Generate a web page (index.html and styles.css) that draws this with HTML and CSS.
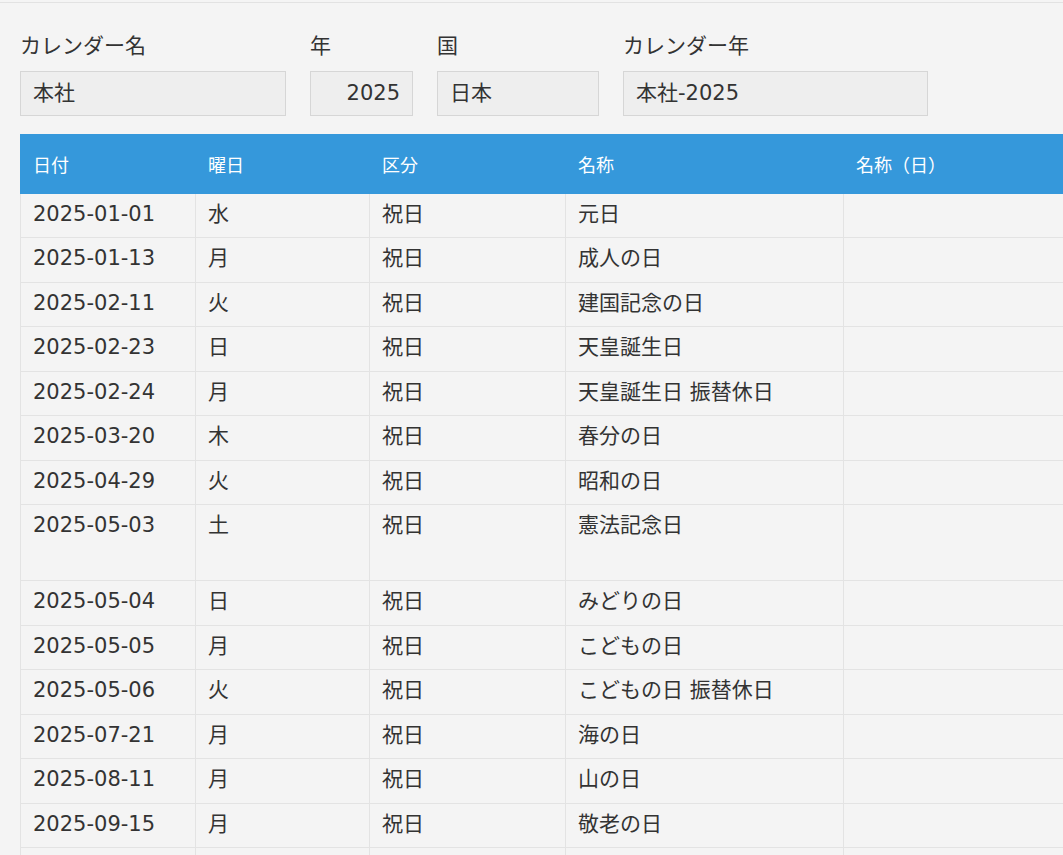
FILE: index.html
```html
<!DOCTYPE html>
<html lang="ja">
<head>
<meta charset="utf-8">
<title>カレンダー</title>
<link rel="stylesheet" href="styles.css">
</head>
<body>
<div class="page">
  <div class="form-row">
    <div class="field field-name">
      <div class="label">カレンダー名</div>
      <div class="input">本社</div>
    </div>
    <div class="field field-year">
      <div class="label">年</div>
      <div class="input input-right">2025</div>
    </div>
    <div class="field field-country">
      <div class="label">国</div>
      <div class="input">日本</div>
    </div>
    <div class="field field-calyear">
      <div class="label">カレンダー年</div>
      <div class="input">本社-2025</div>
    </div>
  </div>

  <table class="grid">
    <colgroup>
      <col class="c1"><col class="c2"><col class="c3"><col class="c4"><col class="c5">
    </colgroup>
    <thead>
      <tr><th>日付</th><th>曜日</th><th>区分</th><th>名称</th><th>名称（日）</th></tr>
    </thead>
    <tbody>
      <tr><td>2025-01-01</td><td>水</td><td>祝日</td><td>元日</td><td></td></tr>
      <tr><td>2025-01-13</td><td>月</td><td>祝日</td><td>成人の日</td><td></td></tr>
      <tr><td>2025-02-11</td><td>火</td><td>祝日</td><td>建国記念の日</td><td></td></tr>
      <tr><td>2025-02-23</td><td>日</td><td>祝日</td><td>天皇誕生日</td><td></td></tr>
      <tr><td>2025-02-24</td><td>月</td><td>祝日</td><td>天皇誕生日 振替休日</td><td></td></tr>
      <tr><td>2025-03-20</td><td>木</td><td>祝日</td><td>春分の日</td><td></td></tr>
      <tr><td>2025-04-29</td><td>火</td><td>祝日</td><td>昭和の日</td><td></td></tr>
      <tr class="tall"><td>2025-05-03</td><td>土</td><td>祝日</td><td>憲法記念日</td><td></td></tr>
      <tr><td>2025-05-04</td><td>日</td><td>祝日</td><td>みどりの日</td><td></td></tr>
      <tr><td>2025-05-05</td><td>月</td><td>祝日</td><td>こどもの日</td><td></td></tr>
      <tr><td>2025-05-06</td><td>火</td><td>祝日</td><td>こどもの日 振替休日</td><td></td></tr>
      <tr><td>2025-07-21</td><td>月</td><td>祝日</td><td>海の日</td><td></td></tr>
      <tr><td>2025-08-11</td><td>月</td><td>祝日</td><td>山の日</td><td></td></tr>
      <tr><td>2025-09-15</td><td>月</td><td>祝日</td><td>敬老の日</td><td></td></tr>
      <tr class="offscreen"><td></td><td></td><td></td><td></td><td></td></tr>
    </tbody>
  </table>
</div>
</body>
</html>
```

FILE: styles.css
```css
html, body {
  margin: 0;
  padding: 0;
  overflow: hidden;
  background: #f4f4f4;
}

body {
  padding-top: 2px;
  font-family: "DejaVu Sans", "Noto Sans CJK JP", sans-serif;
  color: #333333;
}

.page {
  border-top: 1px solid #e2e2e2;
  padding: 29px 0 0 20px;
}

.form-row {
  display: flex;
  gap: 24px;
}

.field {
  display: flex;
  flex-direction: column;
}

.field-name { width: 266px; }
.field-year { width: 103px; }
.field-country { width: 162px; }
.field-calyear { width: 305px; }

.label {
  font-size: 21px;
  line-height: 28px;
  margin-bottom: 11px;
  white-space: nowrap;
}

.input {
  box-sizing: border-box;
  height: 45px;
  border: 1px solid #d6d6d6;
  background: #eeeeee;
  font-size: 21px;
  line-height: 43px;
  padding: 0 12px;
  white-space: nowrap;
}

.input-right {
  text-align: right;
}

.grid {
  margin-top: 18px;
  border-collapse: collapse;
  table-layout: fixed;
  width: 1103px;
}

.c1 { width: 175px; }
.c2 { width: 174px; }
.c3 { width: 196px; }
.c4 { width: 278px; }
.c5 { width: 280px; }

.grid th {
  background: #3598db;
  color: #ffffff;
  font-weight: normal;
  font-size: 18px;
  height: 57.6px;
  padding: 0 12px;
  text-align: left;
  vertical-align: middle;
  border: 1px solid #3598db;
  white-space: nowrap;
}

.grid td {
  font-size: 21px;
  line-height: 26.5px;
  padding: 7px 12px 10px;
  border: 1px solid #e3e3e3;
  vertical-align: top;
  white-space: nowrap;
}

.grid tr.tall td {
  height: 58px;
}

.grid tr.offscreen td {
  height: 27px;
}
```
